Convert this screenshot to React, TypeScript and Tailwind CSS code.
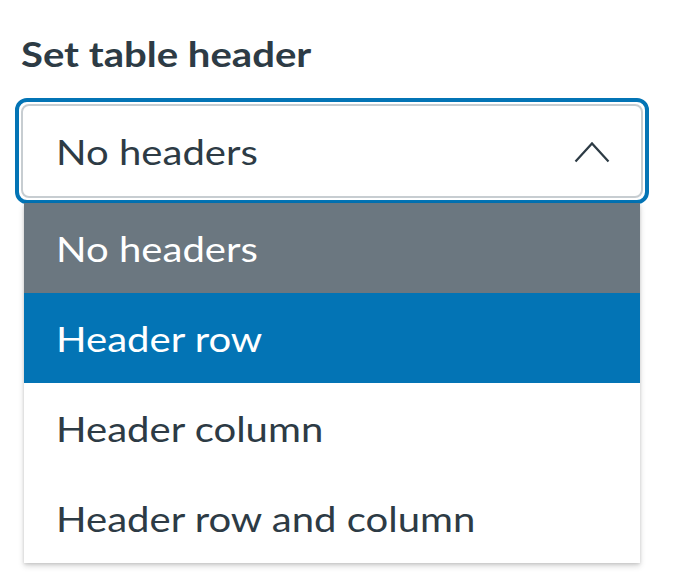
import React from 'react'

const options = ['No headers', 'Header row', 'Header column', 'Header row and column']

// 参考图的文字横向略宽，用 scale-x 对齐
const stretch = 'inline-block origin-left scale-x-[1.145]'

export default function App() {
  const selected = 0
  const highlighted = 1

  return (
    <div className="relative w-[690px] h-[588px] bg-white font-['Lato',sans-serif] text-[#2d3b45]">
      <div className="pt-[32px] pl-[21px]">
        {/* 标题 */}
        <label className="block text-[35px] leading-[42px] font-bold">
          <span className={stretch}>Set table header</span>
        </label>

        {/* 输入框 + 焦点环 */}
        <div className="mt-[24px] w-[634px] rounded-[12px] border-[4px] border-[#0374b5] p-[2px] -ml-[6px]">
          <div className="flex h-[94px] items-center justify-between rounded-[8px] border-2 border-[#c7cdd1] bg-white pl-[33px] pr-[31px]">
            <span className={`${stretch} text-[35px] leading-[42px]`}>No headers</span>
            <svg width="36" height="22" viewBox="0 0 36 22" fill="none" className="mt-[1px]">
              <path d="M1.5 20.5 L18 2.5 L34.5 20.5" stroke="#2d3b45" strokeWidth="2.2" />
            </svg>
          </div>
        </div>
      </div>

      {/* 下拉列表 */}
      <ul className="absolute left-[24px] top-[203px] w-[616px] bg-white shadow-[0_3px_6px_rgba(0,0,0,0.16),0_1px_3px_rgba(0,0,0,0.12)]">
        {options.map((opt, i) => (
          <li
            key={opt}
            className={`flex h-[90px] items-center pl-[32px] text-[35px] leading-[42px] ${
              i === selected
                ? 'bg-[#6b7780] text-white'
                : i === highlighted
                ? 'bg-[#0374b5] text-white'
                : 'text-[#2d3b45]'
            }`}
          >
            <span className={stretch}>{opt}</span>
          </li>
        ))}
      </ul>
    </div>
  )
}
